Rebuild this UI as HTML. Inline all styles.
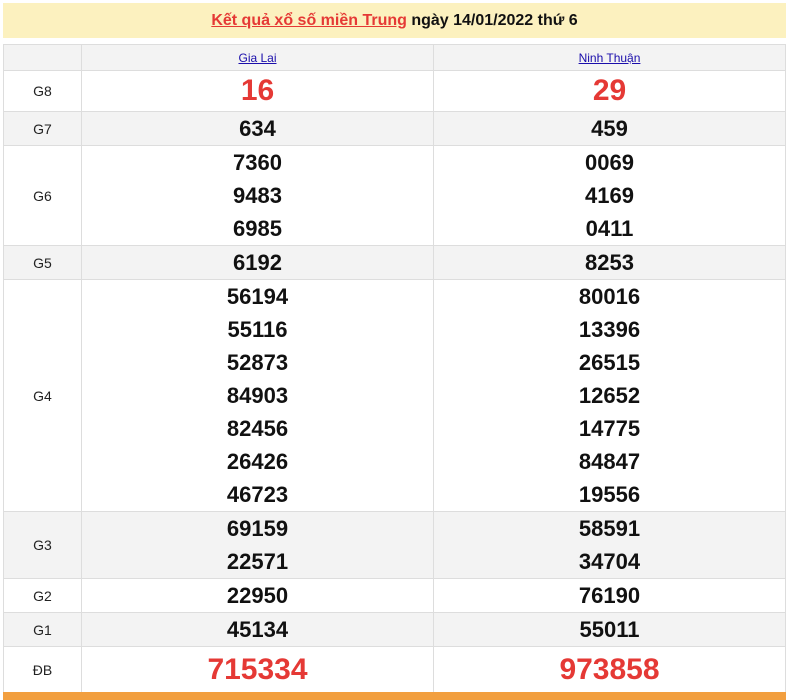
<!DOCTYPE html>
<html><head><meta charset="utf-8"><style>
body{margin:0;background:#fff;font-family:"Liberation Sans",Arial,sans-serif;width:789px;height:700px;overflow:hidden;position:relative}
.hd{position:absolute;left:3px;top:3px;width:783px;height:35px;background:#fcf1bf;text-align:center;line-height:35px;font-size:16px;font-weight:bold;color:#111}
.hd a{color:#e53935;text-decoration:underline}
table{position:absolute;left:3px;top:44px;width:783px;border-collapse:collapse;table-layout:fixed}
td{border:1px solid #ddd;text-align:center;padding:0}
td.l{font-size:14px;color:#222}
tr.g td{background:#f3f3f3}
.n{font-size:22px;font-weight:bold;line-height:33px;color:#111}
.r{font-size:30px;font-weight:bold;color:#e53935}
th{border:1px solid #ddd;background:#f3f3f3;height:25px;padding:0;font-weight:normal;font-size:12px}
th a{color:#1a0dab;text-decoration:underline}
.ft{position:absolute;left:3px;top:692px;width:783px;height:8px;background:#f29f3f}
</style></head><body>
<div class="hd"><a>Kết quả xổ số miền Trung</a> ngày 14/01/2022 thứ 6</div>
<table>
<colgroup><col style="width:78px"><col style="width:352px"><col></colgroup>
<tr><th></th><th><a>Gia Lai</a></th><th><a>Ninh Thuận</a></th></tr>
<tr style="height:41px"><td class="l">G8</td><td class="r">16</td><td class="r">29</td></tr>
<tr class="g" style="height:34px"><td class="l">G7</td><td class="n">634</td><td class="n">459</td></tr>
<tr style="height:100px"><td class="l">G6</td><td class="n">7360<br>9483<br>6985</td><td class="n">0069<br>4169<br>0411</td></tr>
<tr class="g" style="height:34px"><td class="l">G5</td><td class="n">6192</td><td class="n">8253</td></tr>
<tr style="height:232px"><td class="l">G4</td><td class="n">56194<br>55116<br>52873<br>84903<br>82456<br>26426<br>46723</td><td class="n">80016<br>13396<br>26515<br>12652<br>14775<br>84847<br>19556</td></tr>
<tr class="g" style="height:67px"><td class="l">G3</td><td class="n">69159<br>22571</td><td class="n">58591<br>34704</td></tr>
<tr style="height:34px"><td class="l">G2</td><td class="n">22950</td><td class="n">76190</td></tr>
<tr class="g" style="height:34px"><td class="l">G1</td><td class="n">45134</td><td class="n">55011</td></tr>
<tr style="height:46px"><td class="l">ĐB</td><td class="r">715334</td><td class="r">973858</td></tr>
</table>
<div class="ft"></div>
</body></html>
